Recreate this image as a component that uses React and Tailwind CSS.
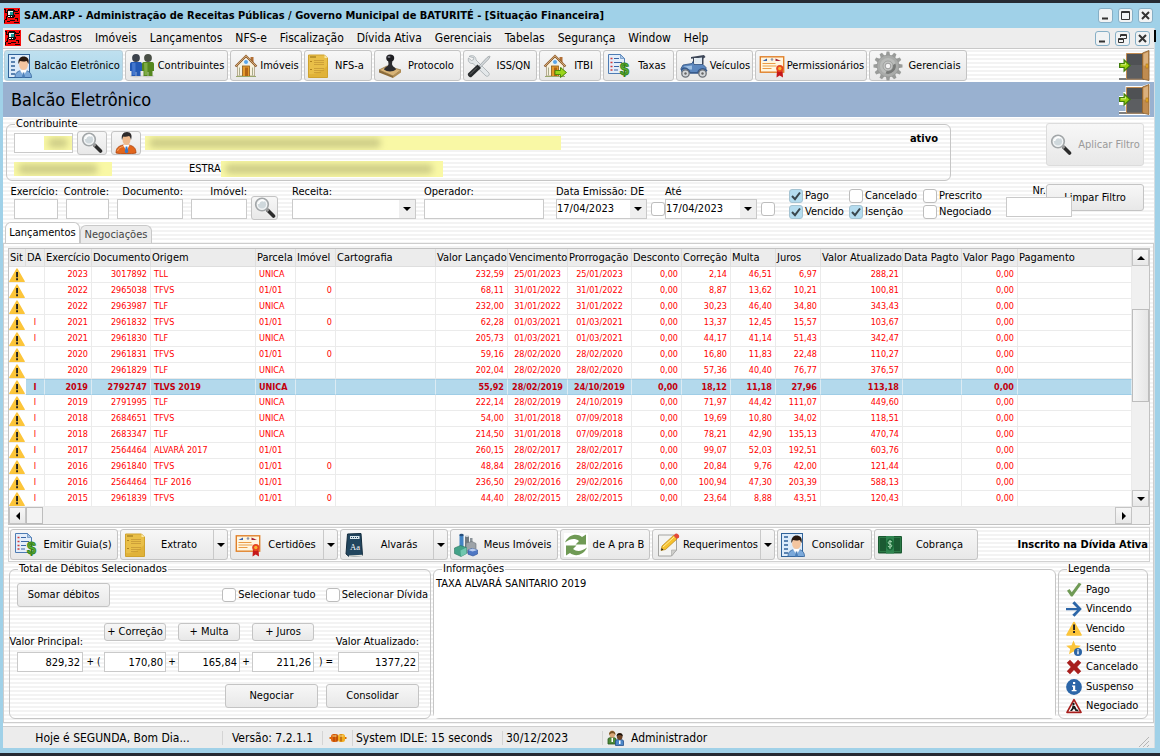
import React from "react";

/* ---------- icons ---------- */

function AppIcon() {
  return (
    <svg viewBox="0 0 16 16" className="size-4 shrink-0" shapeRendering="crispEdges" aria-hidden="true">
      <rect width="16" height="16" fill="#f80c0c" />
      <path
        d="M0 1h2v1H0zM1 2h1v3H1zM2 4h2v1H2zM3 2h1v2H3zM4 1h6v1H4zM10 2h1v2h-1zM11 3h3v1h-3zM14 1h1v2h-1zM11 5h4v1h-4zM10 7h1v2h-1zM4 9h6v1H4zM3 5h1v4H3zM2 8h1v3H2zM1 11h2v1H1zM0 12h1v3H0zM3 13h3v1H3zM6 12h5v1H6zM11 10h3v1h-3zM13 11h1v2h-1zM10 14h5v1h-5z"
        fill="#180404"
      />
      <rect x="4" y="2" width="6" height="7" fill="#181818" />
      <rect x="4" y="3" width="5" height="4" fill="#eef6f6" />
      <rect x="6" y="4" width="3" height="3" fill="#149a9a" />
      <path d="M4 8h2v1H4zM7 8h1v1H7z" fill="#fff" />
    </svg>
  );
}

function BookPerson() {
  return (
    <svg viewBox="0 0 24 24" className="size-6 shrink-0" aria-hidden="true">
      <rect x="0.5" y="0.5" width="21" height="23" fill="#dcebfa" stroke="#2f6299" />
      <path d="M3 4h4M3 8h4M3 12h4M3 16h4M3 20h4" stroke="#2f6299" strokeWidth="1.500" />
      <path d="M7 23.500c0-5 3-6.500 7.500-7.500h2c4 1 7 2.500 7 7.500z" fill="#7ba9da" stroke="#32639a" strokeWidth=".8" />
      <path d="M12 16l3.500 6 3.500-6-3.500-1z" fill="#fff" />
      <path d="M14.800 18.500h1.500l.7 5h-3z" fill="#4b7fb8" />
      <ellipse cx="15.500" cy="10.500" rx="4.400" ry="5.500" fill="#f3c5a0" />
      <path d="M10.500 10c-.8-5 2-7.500 5-7.500 3.500 0 6.200 2 5 7.500-1-1-1-2.500-2-3-2.500.8-5 .5-6.500 0-.7.8-.7 2-1.500 3z" fill="#27180f" />
    </svg>
  );
}

function TwoPeople() {
  return (
    <svg viewBox="0 0 26 24" className="h-6 w-6.5 shrink-0" aria-hidden="true">
      <ellipse cx="7" cy="22" rx="6" ry="1.500" fill="#cfcfcf" />
      <ellipse cx="19" cy="22" rx="6" ry="1.500" fill="#cfcfcf" />
      <circle cx="7" cy="4" r="3.900" fill="#3d434c" />
      <path d="M1 10c0-1.500 1-2 2.500-2h7c1.500 0 2.500.5 2.500 2v7h-1.500v5H7.300v-4h-.6v4H2.500v-5H1z" fill="#2359b5" />
      <path d="M3 9h3.500v12H3.500z" fill="#5c8ee0" opacity=".6" />
      <circle cx="19" cy="4" r="3.900" fill="#4a5046" />
      <path d="M13 10c0-1.500 1-2 2.500-2h7c1.500 0 2.500.5 2.500 2v7h-1.500v5h-4.200v-4h-.6v4h-4.200v-5H13z" fill="#55871f" />
      <path d="M15 9h3.500v12h-3z" fill="#97c35d" opacity=".6" />
    </svg>
  );
}

function House({ arrow = false }) {
  return (
    <svg viewBox="0 0 24 24" className="size-6 shrink-0" aria-hidden="true">
      <path d="M16.500 3h3v6h-3z" fill="#b26f35" />
      <path d="M3.500 11L12 3l8.500 8v11h-17z" fill="#f7f1dd" stroke="#a79a7c" strokeWidth=".8" />
      <path d="M1.500 12.500L12 2l10.500 10.500" fill="none" stroke="#8d5a2d" strokeWidth="2.200" />
      <path d="M2 12L12 1.800 22 12" fill="none" stroke="#e9c48b" strokeWidth=".8" />
      <circle cx="12" cy="8" r="2.500" fill="#5aa6e8" stroke="#fff" strokeWidth=".8" />
      <rect x="8.500" y="12" width="7" height="10.500" fill="#e49a2c" stroke="#8b5a1c" strokeWidth=".8" />
      <rect x="11" y="13.500" width="3" height="9" fill="#b26414" />
      <path d="M5.500 13.500v8M18.500 13.500v8" stroke="#a8ab8c" />
      <path d="M2 22.500h20" stroke="#9aa86d" />
      {arrow && <path d="M12 16.500h5.500V13.500l6 5-6 5v-3H12z" fill="#9ad51b" stroke="#4b8a09" strokeWidth="1" />}
    </svg>
  );
}

function YellowDoc() {
  return (
    <svg viewBox="0 0 20 24" className="h-6 w-5 shrink-0" aria-hidden="true">
      <path d="M.5 1h16l3 3v19.500H.5z" fill="#e9bf48" stroke="#cfa22e" />
      <path d="M16.500 1l3 3h-3z" fill="#fae9a8" />
      <path d="M2 3h6" stroke="#8e6c14" />
      <path d="M6 6.500h10M6 8.500h10M6 10.500h10M6 14.500h10M6 16.500h10M6 18.500h7" stroke="#cda039" />
      <path d="M2 7.500h2M2 15.500h2" stroke="#b0821e" />
      <path d="M1 20c6 1 13-3 18-8v11H1z" fill="#d39f24" opacity=".4" />
    </svg>
  );
}

function Stamp() {
  return (
    <svg viewBox="0 0 24 24" className="size-6 shrink-0" aria-hidden="true">
      <path d="M1 16l8-4 14 4-8 6z" fill="#d9b477" stroke="#8a6a35" strokeWidth=".7" />
      <path d="M1 16v2.500l14 5.500v-2z" fill="#8b6b39" />
      <path d="M15 22v2l8-5.500V16z" fill="#b08b50" />
      <path d="M6 15.500c1-3 4-2.500 4.500-5.500L10 6h4.500L14 10c.5 3 3.500 3 4 5.500-3 2.500-9 2.500-12 0z" fill="#2b2b2f" />
      <ellipse cx="12.200" cy="4" rx="4" ry="3.600" fill="#1e1e22" />
      <ellipse cx="11" cy="3" rx="1.500" ry="1" fill="#7c7c86" />
    </svg>
  );
}

function Tools() {
  return (
    <svg viewBox="0 0 24 24" className="size-6 shrink-0" aria-hidden="true">
      <path d="M2 2.500C5 .5 9 2 9 6l13 13c1 2-1 4-3 3L6 9.500C2.500 10 .5 7 1.500 4l3 2.500 2-.8.4-2z" fill="#e3e7e9" stroke="#a3abaf" strokeWidth=".8" />
      <path d="M12 12L20 3.500l2.500-1.500.5.800-1.500 2.400-8 8z" fill="#d4d9dc" stroke="#8f9598" strokeWidth=".7" />
      <path d="M10.500 10.500l3.500 3.500-9.500 9c-1.500 1-4.500-1.500-3.500-3.500z" fill="#26292b" />
      <path d="M10 13.500l-7 7" stroke="#777" strokeWidth=".8" />
    </svg>
  );
}

function DocDollar() {
  return (
    <svg viewBox="0 0 24 24" className="size-6 shrink-0 overflow-visible" aria-hidden="true">
      <path d="M1.500.5h12l4 4v15h-16z" fill="#e4eefa" stroke="#4e7cb4" />
      <path d="M13.500.5v4h4z" fill="#a9c5e6" stroke="#4e7cb4" strokeWidth=".6" />
      <path d="M3.500 4.500h2M3.500 8.500h2M3.500 12.500h2M3.500 16h2" stroke="#d03b3b" strokeWidth="1.600" />
      <path d="M7 4.500h5M7 8.500h8M7 12.500h5M7 16h4" stroke="#3a67a5" strokeWidth="1.200" />
      <text x="17.500" y="20.500" textAnchor="middle" fontFamily="Liberation Sans, sans-serif" fontWeight="700" fontSize="16" fill="#5cb531" stroke="#35801a" strokeWidth=".9">$</text>
    </svg>
  );
}

function Car() {
  return (
    <svg viewBox="0 0 28 24" className="h-6 w-7 shrink-0" aria-hidden="true">
      <path d="M11 3l13-2 1.500 2-2 1.500v6H22V4H14v5h-1V4.500l-2 .3z" fill="#3e4758" />
      <path d="M14.500 4.500l7.500-1v6h-7.500z" fill="#dfe9f2" />
      <path d="M3 11l9-1.500 1-2 1 3h9l3 3v5H2l-1-4z" fill="#5b87bf" stroke="#2c4e7d" strokeWidth=".8" />
      <path d="M4 12.500l8-1v4H5z" fill="#9dbfe3" />
      <path d="M1 16c4-4 8-1 9 3h8c0-4 6-6 9-2" fill="none" stroke="#35588a" strokeWidth="1.500" />
      <circle cx="5.500" cy="19.500" r="3.700" fill="#d5d8db" stroke="#6c7178" strokeWidth="1.300" />
      <circle cx="22.500" cy="19.500" r="3.700" fill="#d5d8db" stroke="#6c7178" strokeWidth="1.300" />
      <circle cx="5.500" cy="19.500" r="1.200" fill="#666" />
      <circle cx="22.500" cy="19.500" r="1.200" fill="#666" />
    </svg>
  );
}

function Certificate() {
  return (
    <svg viewBox="0 0 25 24" className="h-6 w-6.5 shrink-0" aria-hidden="true">
      <rect x=".8" y="2.800" width="23.400" height="15.400" fill="#fff6e0" stroke="#e0812a" strokeWidth="1.400" />
      <path d="M3 7l4.500-2.500V7z" fill="#3b62ad" />
      <circle cx="12.500" cy="5.500" r="1.300" fill="#8c97ad" />
      <path d="M16 7V4.500L21.500 7z" fill="#a3243b" />
      <path d="M3 9.500h13M3 12h14M3 14.500h9" stroke="#eb9b45" strokeWidth="1.200" />
      <path d="M17.500 16l-.5 7.500 3.200-2 3.300 2L23 16z" fill="#c6181a" />
      <circle cx="20.300" cy="14.500" r="3.600" fill="#e6451f" />
      <circle cx="20.300" cy="14.500" r="1.700" fill="#f7b431" />
    </svg>
  );
}

function Gear() {
  return (
    <svg viewBox="0 0 30 30" className="size-7.5 shrink-0" aria-hidden="true">
      <g fill="#999b99">
        {[0, 30, 60, 90, 120, 150, 180, 210, 240, 270, 300, 330].map((a) => (
          <path key={a} d="M12.800 5l.8-4.500h2.800l.8 4.500z" transform={`rotate(${a} 15 15)`} />
        ))}
      </g>
      <circle cx="15" cy="15" r="11" fill="#a9aba9" stroke="#8f918f" strokeWidth=".6" />
      <circle cx="15" cy="15" r="8" fill="#b9bbb9" />
      <path d="M22.500 12.500a8 8 0 01-10 10L15 17z" fill="#777977" />
      <circle cx="15" cy="15" r="5" fill="#c4c6c4" stroke="#8a8c8a" strokeWidth=".6" />
      <circle cx="15" cy="15" r="2.800" fill="#f5f5f5" stroke="#888" strokeWidth=".8" />
    </svg>
  );
}

function Door({ outlined }) {
  return (
    <svg viewBox="0 0 31 31" className="size-[31px] shrink-0" aria-hidden="true">
      {outlined && <path d="M0 31V27h6.500v-4.500L4 21H0v-9h4V8h2.500V2H23l6-2h2v31z" fill="#fff" />}
      <path d="M0 29h25" stroke="#555" strokeWidth="1.500" />
      <path d="M7.500 3.500h16V29h-16z" fill="#4f5154" stroke="#c08a50" strokeWidth="1" />
      <path d="M8 15h15v14H8z" fill="#66686b" opacity=".6" />
      <path d="M23.500 3L30 .5v30L23.500 29z" fill="#c08c50" stroke="#8b5f2c" strokeWidth=".8" />
      <path d="M24.500 4L29 2v14l-4.500-.5z" fill="#dbb07c" />
      <rect x="27" y="14" width="2" height="4" fill="#f4b52c" stroke="#a36d12" strokeWidth=".6" />
      <path d="M.6 13.500h4.500v-3.700l6 5.700-6 5.700v-3.700H.6z" fill="#99cf0e" stroke="#3f7d0a" strokeWidth="1.200" />
      <path d="M2 14.800h4.500v-2" fill="none" stroke="#d9f58c" strokeWidth=".9" />
    </svg>
  );
}

function Magnifier() {
  return (
    <svg viewBox="0 0 22 22" className="size-5.5 shrink-0" aria-hidden="true">
      <path d="M14 13.500l5.500 5.500" stroke="#2c2c2c" strokeWidth="3.600" strokeLinecap="round" />
      <path d="M12 11.500l2.500 2.500" stroke="#9a9a9a" strokeWidth="2.500" />
      <circle cx="8" cy="7.500" r="6.300" fill="#e4e8ea" stroke="#a2a6a8" strokeWidth="1.600" />
      <circle cx="8" cy="7.500" r="4.600" fill="#cfd8dc" stroke="#fff" strokeWidth=".8" />
      <path d="M4.500 7a4 4 0 016-3" fill="none" stroke="#fff" strokeWidth="1.600" />
    </svg>
  );
}

function Person() {
  return (
    <svg viewBox="0 0 22 22" className="size-5.5 shrink-0" aria-hidden="true">
      <path d="M1 21c0-5 2.500-7 7-8h6c4.500 1 7 3 7 8-5 1.300-15 1.300-20 0z" fill="#e2661c" stroke="#a53d08" strokeWidth=".7" />
      <path d="M2.500 19c1-3 3-4 6-4.500" stroke="#f7a562" fill="none" />
      <path d="M8 13l3.500 6 3-6-3-1z" fill="#fff" />
      <path d="M10.700 14.500h1.600l1 5.500-1.800 1.500-1.800-1.500z" fill="#3979c8" />
      <ellipse cx="11.500" cy="7.500" rx="4" ry="5.500" fill="#efb98c" />
      <path d="M7 8c-1-5 1-8 5-8s5.500 3 4 8c-.5-2-1-3.500-2-4-2 .8-4 .8-5.500.5C7.500 5.500 7.500 7 7 8z" fill="#2d2a2b" />
    </svg>
  );
}

function DictBook() {
  return (
    <svg viewBox="0 0 20 24" className="h-6 w-5 shrink-0" aria-hidden="true">
      <path d="M2.500 1L16 .5l1.500 22L4 23.500 1 21z" fill="#21455e" stroke="#142c3e" />
      <path d="M4 22.500l13.500-.8v1.300L4 24z" fill="#e5e5dd" />
      <rect x="5" y="3" width="9.500" height="3" fill="#d9e6ec" />
      <path d="M6 4.500h7.500" stroke="#21455e" strokeDasharray="1 1" />
      <text x="5" y="16.500" fontFamily="Liberation Serif, serif" fontSize="8.500" fill="#fff">Aa</text>
    </svg>
  );
}

function Towers() {
  return (
    <svg viewBox="0 0 24 24" className="size-6 shrink-0" aria-hidden="true">
      <path d="M5.500 2h4v17h-4z" fill="#4384c4" /><ellipse cx="7.500" cy="2" rx="2.200" ry="1.200" fill="#274f7c" />
      <path d="M11 3h4v14h-4z" fill="#727a80" /><ellipse cx="13" cy="3" rx="2" ry="1.100" fill="#d5dade" />
      <path d="M16 5h2.500v9H16z" fill="#8b9399" />
      <path d="M12 10l6-1.500 4 2v9l-6 1.500-4-2z" fill="#9da3a8" stroke="#6a7075" strokeWidth=".6" />
      <path d="M.5 15l6-2.500 6 2v6L7 23.500l-6.500-3z" fill="#44a389" stroke="#2a7560" strokeWidth=".6" />
      <path d="M.5 15l6 2.500 6-3v6L7 23.500l-.5-6z" fill="#71c7ae" />
      <path d="M14 17l4-1.500 5.500 1.500v4L19 23l-5-1.800z" fill="#4f78c4" stroke="#2c4f95" strokeWidth=".6" />
      <path d="M14 17l4.500 1.500 5-1.500-5-1.500z" fill="#b9ccee" />
    </svg>
  );
}

function Refresh() {
  return (
    <svg viewBox="0 0 24 24" className="size-6 shrink-0" aria-hidden="true">
      <rect width="24" height="24" fill="#fff" />
      <path d="M1 9.500C4.500 1.500 13 0 18 4l4-2.500v10H11.500L15 8C11 5 6.500 5.500 1 9.500z" fill="#6f9a55" />
      <path d="M23 14.500C19.500 22.500 11 24 6 20l-4 2.500v-10h10.500L9 16c4 3 8.500 2.500 14-1.500z" fill="#6f9a55" />
    </svg>
  );
}

function NotePencil() {
  return (
    <svg viewBox="0 0 24 24" className="size-6 shrink-0" aria-hidden="true">
      <path d="M1.500 2h18v15l-5 6h-13z" fill="#f4f4f2" stroke="#a4a4a2" />
      <path d="M19.500 17h-5v6z" fill="#cfcfcc" stroke="#a4a4a2" strokeWidth=".6" />
      <path d="M4 17.500L5 13 16.500 2.500l3.500 3.500L8.500 16.500z" fill="#f6c12d" stroke="#b88415" strokeWidth=".7" />
      <path d="M6 14L17.500 3.700" stroke="#fdeb9b" />
      <path d="M16.500 2.500L18.500.7c1.500-1 4.500 1.500 3.500 3.500l-2 1.800z" fill="#e3493a" />
      <path d="M4 17.500l.7-2.500 1.700 1.800z" fill="#222" />
    </svg>
  );
}

function Cash() {
  return (
    <svg viewBox="0 0 24 18" className="h-[18px] w-6 shrink-0" aria-hidden="true">
      <rect width="24" height="17.500" rx="1" fill="#1b5a32" />
      <rect x="1.500" y="1.500" width="21" height="14" fill="none" stroke="#2c7a47" />
      <rect x="8" width="8" height="17.500" fill="#2f8550" />
      <ellipse cx="12" cy="8.500" rx="4" ry="6" fill="#1b6a38" />
      <path d="M14 6c-1-1.200-3.800-1-3.800.8 0 1.800 3.600 1 3.600 3 0 1.600-2.800 1.700-3.900.4M12 4v9" fill="none" stroke="#a9d9b5" strokeWidth="1" />
    </svg>
  );
}

function Warning() {
  return (
    <svg viewBox="0 0 16 15" className="block h-[15px] w-4 shrink-0" aria-hidden="true">
      <path d="M8 2.200L15 14.500H1z" fill="#fcc53a" stroke="#fcc53a" strokeWidth="1.600" strokeLinejoin="round" />
      <path d="M7.100 5h1.900v5.200H7.100zM7.100 11.300h1.900v2H7.100z" fill="#222" />
    </svg>
  );
}

function LegendIcon({ kind }) {
  return (
    <svg viewBox="0 0 16 16" className="size-4 shrink-0" aria-hidden="true">
      {kind === "check" && <path d="M1 8.800L3.500 7l2.300 3.200L12.800.8 15.500 2 6.500 14.500 5 14.500z" fill="#6f9a55" />}
      {kind === "arrow" && <path d="M0 7h11L6.300 2.200 8.500.3 15.800 8l-7.300 7.700-2.200-2L11 9.200H0z" fill="#2c66a8" />}
      {kind === "warn" && (
        <>
          <path d="M8 1.500L15 14H1z" fill="#fcc53a" stroke="#fcc53a" strokeWidth="1.600" strokeLinejoin="round" />
          <path d="M7.100 3.500h1.900v5.500H7.100zM7.100 10h1.900v2H7.100z" fill="#222" />
        </>
      )}
      {kind === "star" && (
        <>
          <path d="M7.500.5l2 4.800 5.300.4-4 3.400 1.200 5.200-4.500-2.800-4.500 2.800 1.200-5.200-4-3.400 5.300-.4z" fill="#fcc53a" />
          <circle cx="12" cy="12" r="4" fill="#2b64a5" />
          <path d="M11.300 9.300h1.400v1.200h-1.400zM11.300 11.200h1.400v3h-1.400z" fill="#fff" />
        </>
      )}
      {kind === "cross" && (
        <path d="M4 .8L8 4.900l4-4.100 3.200 3L11.200 8l4 4.200-3.200 3-4-4.100-4 4.100-3.200-3L4.800 8l-4-4.200z" fill="#a81f1d" />
      )}
      {kind === "info" && (
        <>
          <circle cx="8" cy="8" r="7.900" fill="#2c66a8" />
          <path d="M7 3h2.200v2H7zM6 6.500h3.200V11H10.500v1.300H5.700V11H7V7.800H6z" fill="#fff" />
        </>
      )}
      {kind === "works" && (
        <>
          <path d="M8 1.700L15 14.300H1z" fill="#fff" stroke="#a81f1d" strokeWidth="1.700" strokeLinejoin="round" />
          <circle cx="7.500" cy="6" r="1.200" fill="#1b1b1b" />
          <path d="M6.500 7.200l2.500.8 2.500 5h-2L8 10.500 6 13H4l2-3zM11 11l2 2.300h-2.500z" fill="#1b1b1b" />
        </>
      )}
    </svg>
  );
}

function Connector() {
  return (
    <svg viewBox="0 0 17 10" className="h-2.5 w-4.5 shrink-0" aria-hidden="true">
      <path d="M0 5h3M14 5h3" stroke="#d96d00" strokeWidth="2" />
      <rect x="1.500" y="1" width="7" height="8" rx="2.500" fill="#e0620d" />
      <rect x="8.500" y="1" width="7" height="8" rx="2.500" fill="#f2ac1e" />
      <path d="M4.500 1.500v7M7.500 1.500v7M11.500 1.500v7" stroke="#9c4107" />
      <path d="M3 3h4M10 3h4" stroke="#ffe08a" />
    </svg>
  );
}

function UsersMini() {
  return (
    <svg viewBox="0 0 18 16" className="h-4 w-4.5 shrink-0" aria-hidden="true">
      <path d="M1 14V9c0-2 8-2 8 0v5z" fill="#4c8a3a" stroke="#27561a" strokeWidth=".8" />
      <path d="M4.500 8v4h1.500V8z" fill="#fff" />
      <ellipse cx="5.200" cy="4.200" rx="2.800" ry="3.600" fill="#d9a878" />
      <path d="M2 5C1.500-.5 9-.5 8.500 5 7 2.500 4 2.500 2 5z" fill="#775224" />
      <path d="M8.500 15.500V11c0-2 8-2 8 0v4.500z" fill="#4b86c8" stroke="#23508a" strokeWidth=".8" />
      <path d="M12 10.500V14h1.500v-3.500z" fill="#fff" />
      <ellipse cx="12.700" cy="6.500" rx="2.800" ry="3.400" fill="#6b4226" />
      <path d="M9.500 6.500c-.5-4.500 7-4.500 6.300 0-1.500-2-5-2-6.300 0z" fill="#17100b" />
    </svg>
  );
}

function ArrowGlyph({ dir = "down" }) {
  const d = {
    down: "M0 2h8L4 6z",
    up: "M0 6h8L4 2z",
    left: "M6 0v8L2 4z",
    right: "M2 0v8l4-4z",
  }[dir];
  return (
    <svg viewBox="0 0 8 8" className="size-2 shrink-0" aria-hidden="true">
      <path d={d} fill="#000" />
    </svg>
  );
}

/* ---------- shared controls ---------- */

const STRIPES =
  "bg-[repeating-linear-gradient(180deg,#ffffff_0px,#ffffff_2px,#f3f3f3_2px,#f3f3f3_4px)]";
const BTN =
  "flex items-center rounded-[3px] border border-[#c4c4c4] bg-linear-to-b from-[#f7f7f7] to-[#e8e8e8] whitespace-nowrap";
const FIELD = "border border-[#cacaca] bg-white outline-none";

function PushButton({ className, children, ...rest }) {
  return (
    <button type="button" className={`${BTN} justify-center ${className}`} {...rest}>
      {children}
    </button>
  );
}

function ToolButton({ icon, label, className, active }) {
  return (
    <button
      type="button"
      className={`flex h-[31px] shrink-0 items-center rounded-[3px] border pl-[3px] whitespace-nowrap ${
        active
          ? "border-[#b9cfda] bg-linear-to-b from-[#bfe0ef] to-[#a9d5ea]"
          : "border-[#c4c4c4] bg-linear-to-b from-[#f7f7f7] to-[#e8e8e8]"
      } ${className}`}
    >
      {icon}
      <span className="flex-1 text-center">{label}</span>
    </button>
  );
}

function SplitButton({ icon, label, className }) {
  return (
    <div className={`${BTN} h-[31px] shrink-0 ${className}`}>
      <button type="button" className="flex h-full flex-1 items-center pl-1">
        {icon}
        <span className="flex-1 text-center">{label}</span>
      </button>
      <button type="button" aria-label={`Opções de ${label}`} className="flex h-full w-3.5 items-center justify-center border-l border-[#c9c9c9]">
        <ArrowGlyph />
      </button>
    </div>
  );
}

function TextField({ label, className, labelClass = "text-right" }) {
  return (
    <label className={`flex flex-col ${className}`}>
      <span className={`h-[15px] whitespace-nowrap leading-[15px] ${labelClass}`}>{label}</span>
      <input type="text" className={`h-5 w-full ${FIELD}`} />
    </label>
  );
}

function SelectField({ label, value, className }) {
  return (
    <label className={`flex flex-col ${className}`}>
      <span className="h-[15px] whitespace-nowrap leading-[15px]">{label}</span>
      <span className="grid">
        <select className={`col-start-1 row-start-1 h-5 w-full appearance-none ${FIELD}`} defaultValue={value}>
          <option>{value}</option>
        </select>
        <span className="pointer-events-none col-start-1 row-start-1 m-px flex w-4 items-center justify-center justify-self-end bg-[#efefef]">
          <ArrowGlyph />
        </span>
      </span>
    </label>
  );
}

function Check({ label, checked, hidden, className = "gap-0.5" }) {
  return (
    <label className={`flex items-center whitespace-nowrap ${className}`}>
      <span className="grid size-3.5 place-items-center">
        <input
          type="checkbox"
          defaultChecked={checked}
          aria-label={hidden ? label : undefined}
          className="peer col-start-1 row-start-1 size-3.5 appearance-none rounded-[3px] border border-[#bdbdbd] bg-white checked:border-[#a5c3d2] checked:bg-[#b5dcef]"
        />
        <svg viewBox="0 0 12 12" className="pointer-events-none invisible col-start-1 row-start-1 size-3 peer-checked:visible" aria-hidden="true">
          <path d="M2 6l3 3.200L10 2.500" fill="none" stroke="#3a464d" strokeWidth="2" />
        </svg>
      </span>
      {!hidden && <span>{label}</span>}
    </label>
  );
}

function Group({ title, className, children }) {
  return (
    <fieldset className={`flex min-w-0 flex-col rounded-md border border-[#c6c6c6] ${className}`}>
      <legend className="ml-2 h-3.5 px-px leading-3.5">{title}</legend>
      {children}
    </fieldset>
  );
}

function WinButtons({ restore }) {
  const cls =
    "flex size-[15px] items-center justify-center rounded-[3px] border border-[#86afc6] bg-[#f1f3f4] text-[#333]";
  return (
    <div className="flex gap-[5px]">
      <button type="button" aria-label="Minimizar" className={cls}>
        <svg viewBox="0 0 11 11" className="size-[11px]"><path d="M2 8.500h6" stroke="currentColor" strokeWidth="2" /></svg>
      </button>
      <button type="button" aria-label={restore ? "Restaurar" : "Maximizar"} className={cls}>
        <svg viewBox="0 0 11 11" className="size-[11px]" fill="none" stroke="currentColor">
          {restore ? (
            <path d="M3.500 4V1.500h6v4H7M3.500 2.500h6M1.500 5.500h5v4h-5zM1.500 6.500h5" />
          ) : (
            <path d="M1.500 1.500h8v8h-8zM1.500 2.500h8" />
          )}
        </svg>
      </button>
      <button type="button" aria-label="Fechar" className={cls}>
        <svg viewBox="0 0 11 11" className="size-[11px]"><path d="M2 2l7 7M9 2l-7 7" stroke="currentColor" strokeWidth="2" /></svg>
      </button>
    </div>
  );
}

/* ---------- data ---------- */

const MENUS = ["Cadastros", "Imóveis", "Lançamentos", "NFS-e", "Fiscalização", "Dívida Ativa", "Gerenciais", "Tabelas", "Segurança", "Window", "Help"];

const COLUMNS = [
  ["Sit", "w-[17px]", "text-left"],
  ["DA", "w-[19px]", "text-center"],
  ["Exercício", "w-[47px]", "text-right"],
  ["Documento", "w-[59px]", "text-right"],
  ["Origem", "w-[105px]", "text-left"],
  ["Parcela", "w-[40px]", "text-left"],
  ["Imóvel", "w-[40px]", "text-right"],
  ["Cartografia", "w-[100px]", "text-left"],
  ["Valor Lançado", "w-[72px]", "text-right"],
  ["Vencimento", "w-[60px]", "text-center"],
  ["Prorrogação", "w-[64px]", "text-center"],
  ["Desconto", "w-[50px]", "text-right"],
  ["Correção", "w-[49px]", "text-right"],
  ["Multa", "w-[45px]", "text-right"],
  ["Juros", "w-[45px]", "text-right"],
  ["Valor Atualizado", "w-[82px]", "text-right"],
  ["Data Pagto", "w-[59px]", "text-left"],
  ["Valor Pago", "w-[56px]", "text-right"],
  ["Pagamento", "", "text-left"],
];

const ROWS = [
  "|2023|3017892|TLL|UNICA|||232,59|25/01/2023|25/01/2023|0,00|2,14|46,51|6,97|288,21||0,00|",
  "|2022|2965038|TFVS|01/01|0||68,11|31/01/2022|31/01/2022|0,00|8,87|13,62|10,21|100,81||0,00|",
  "|2022|2963987|TLF|UNICA|||232,00|31/01/2022|31/01/2022|0,00|30,23|46,40|34,80|343,43||0,00|",
  "I|2021|2961832|TFVS|01/01|0||62,28|01/03/2021|01/03/2021|0,00|13,37|12,45|15,57|103,67||0,00|",
  "I|2021|2961830|TLF|UNICA|||205,73|01/03/2021|01/03/2021|0,00|44,17|41,14|51,43|342,47||0,00|",
  "|2020|2961831|TFVS|01/01|0||59,16|28/02/2020|28/02/2020|0,00|16,80|11,83|22,48|110,27||0,00|",
  "|2020|2961829|TLF|UNICA|||202,04|28/02/2020|28/02/2020|0,00|57,36|40,40|76,77|376,57||0,00|",
  "I|2019|2792747|TLVS 2019|UNICA|||55,92|28/02/2019|24/10/2019|0,00|18,12|11,18|27,96|113,18||0,00|",
  "I|2019|2791995|TLF|UNICA|||222,14|28/02/2019|24/10/2019|0,00|71,97|44,42|111,07|449,60||0,00|",
  "I|2018|2684651|TFVS|UNICA|||54,00|31/01/2018|07/09/2018|0,00|19,69|10,80|34,02|118,51||0,00|",
  "I|2018|2683347|TLF|UNICA|||214,50|31/01/2018|07/09/2018|0,00|78,21|42,90|135,13|470,74||0,00|",
  "I|2017|2564464|ALVARÁ 2017|01/01|||260,15|28/02/2017|28/02/2017|0,00|99,07|52,03|192,51|603,76||0,00|",
  "I|2016|2961840|TFVS|01/01|0||48,84|28/02/2016|28/02/2016|0,00|20,84|9,76|42,00|121,44||0,00|",
  "I|2016|2564464|TLF 2016|01/01|||236,50|29/02/2016|29/02/2016|0,00|100,94|47,30|203,39|588,13||0,00|",
  "I|2015|2961839|TFVS|01/01|0||44,40|28/02/2015|28/02/2015|0,00|23,64|8,88|43,51|120,43||0,00|",
].map((r) => r.split("|"));

const SELECTED = 7;

const LEGEND = [
  ["check", "Pago"],
  ["arrow", "Vincendo"],
  ["warn", "Vencido"],
  ["star", "Isento"],
  ["cross", "Cancelado"],
  ["info", "Suspenso"],
  ["works", "Negociado"],
];

/* ---------- sections ---------- */

function Redacted({ className, inner }) {
  return (
    <span className={`flex items-center overflow-hidden bg-[#f9f8a5] ${className}`}>
      <span className={`block rounded-full bg-[#cfce88] blur-[3px] ${inner}`} />
    </span>
  );
}

function Taxpayer() {
  return (
    <div className="flex items-start justify-between pr-2.5 pl-[3px]">
      <Group title="Contribuinte" className="h-16 w-[945px]">
        <div className="flex flex-col pr-3 pl-[7px]">
          <div className="flex h-6 items-center gap-1">
            <span className={`flex h-5 w-[59px] items-center justify-end ${FIELD}`}>
              <Redacted className="h-3.5 w-7" inner="ml-1 h-2.5 w-5" />
            </span>
            <PushButton className="h-6 w-[30px]" aria-label="Pesquisar contribuinte"><Magnifier /></PushButton>
            <PushButton className="h-6 w-[30px]" aria-label="Abrir cadastro"><Person /></PushButton>
            <Redacted className="h-3.5 w-[416px]" inner="ml-1 h-2.5 w-[232px]" />
            <span className="ml-auto self-start pt-px font-bold">ativo</span>
          </div>
          <div className="flex h-6 items-center pt-1">
            <Redacted className="h-3.5 w-[98px]" inner="ml-1 h-2.5 w-20" />
            <span className="ml-[77px]">ESTRA</span>
            <Redacted className="h-4 w-[222px]" inner="ml-1 h-2.5 w-[208px]" />
          </div>
        </div>
      </Group>
      <PushButton disabled className="mt-1.5 h-[43px] w-[98px] gap-1.5 border-[#dcdcdc] text-[#9a9a9a]">
        <Magnifier />
        Aplicar Filtro
      </PushButton>
    </div>
  );
}

function Filters() {
  return (
    <div className="flex items-start pt-[3px] pr-2.5 pl-[11px]">
      <TextField label="Exercício:" className="w-[44px] items-end" />
      <TextField label="Controle:" className="ml-2 w-[43px] items-end" />
      <TextField label="Documento:" className="ml-2 w-[66px]" />
      <TextField label="Imóvel:" className="ml-2 w-[56px]" />
      <PushButton className="mt-3 ml-1 h-6 w-[27px]" aria-label="Pesquisar imóvel"><Magnifier /></PushButton>
      <SelectField label="Receita:" value="" className="ml-3.5 w-[124px]" />
      <TextField label="Operador:" labelClass="text-left" className="ml-2 w-[120px]" />
      <SelectField label="Data Emissão: DE" value="17/04/2023" className="ml-3 w-[91px]" />
      <Check label="Ativar data inicial" hidden className="mt-4.5 ml-1" />
      <SelectField label="Até" value="17/04/2023" className="w-[92px]" />
      <Check label="Ativar data final" hidden className="mt-4.5 ml-1" />
      <div className="mt-[5px] ml-3.5 grid grid-cols-[60px_74px_80px] gap-y-0.5">
        <Check label="Pago" checked />
        <Check label="Cancelado" />
        <Check label="Prescrito" />
        <Check label="Vencido" checked />
        <Check label="Isenção" checked />
        <Check label="Negociado" />
      </div>
      <div className="ml-auto flex items-start">
        <label className="z-10 -mr-6.5 flex w-[66px] flex-col">
          <span className="pt-px pr-6.5 text-right leading-3">Nr.</span>
          <input type="text" className={`h-5 w-full ${FIELD}`} />
        </label>
        <PushButton className="h-[27px] w-[98px]">Limpar Filtro</PushButton>
      </div>
    </div>
  );
}

function DataGrid() {
  return (
    <div className="flex border border-[#c2c2c2] bg-[#f0f0f0]">
      <div className="min-w-0 flex-1">
        <table className="w-full table-fixed border-separate border-spacing-0 bg-white">
          <colgroup>
            {COLUMNS.map(([name, width]) => (
              <col key={name} className={width} />
            ))}
          </colgroup>
          <thead>
            <tr>
              {COLUMNS.map(([name]) => (
                <th key={name} className="h-[18px] border-r border-b border-[#dedede] bg-[#ececec] p-0 pl-px text-left leading-4 font-normal whitespace-nowrap">
                  {name}
                </th>
              ))}
            </tr>
          </thead>
          <tbody className="text-[9px] leading-[15px] text-[#ff0000]">
            {ROWS.map((row, r) => {
              const sel = r === SELECTED;
              const tone = sel ? "border-t border-t-[#9fcde6] border-r-[#dcebf3] border-b-[#9fcde6] bg-[#b3d9ec] font-bold text-[#c2000c] leading-[14px]" : "border-r-[#ebebeb] border-b-[#ebebeb]";
              return (
                <tr key={row[2] + r}>
                  <td className="border-b border-[#ebebeb] p-0"><Warning /></td>
                  {row.map((cell, c) => (
                    <td key={c} className={`border-r border-b px-[3px] py-0 whitespace-nowrap ${tone} ${COLUMNS[c + 1][2]}`}>
                      {cell}
                    </td>
                  ))}
                </tr>
              );
            })}
          </tbody>
        </table>
        <div className="flex h-[17px]">
          <button type="button" aria-label="Rolar para a esquerda" className={`${BTN} w-[17px] justify-center rounded-none`}><ArrowGlyph dir="left" /></button>
          <span className="w-[17px] border border-[#bdbdbd] bg-[#f3f3f3]" />
          <button type="button" aria-label="Rolar para a direita" className={`${BTN} ml-auto w-[17px] justify-center rounded-none`}><ArrowGlyph dir="right" /></button>
        </div>
      </div>
      <div className="flex w-[17px] flex-col pb-[17px]">
        <button type="button" aria-label="Rolar para cima" className={`${BTN} h-[17px] justify-center rounded-none`}><ArrowGlyph dir="up" /></button>
        <span className="mt-[43px] h-[93px] border border-[#bdbdbd] bg-linear-to-r from-[#f5f5f5] to-[#e6e6e6]" />
        <button type="button" aria-label="Rolar para baixo" className={`${BTN} mt-auto h-[17px] justify-center rounded-none`}><ArrowGlyph dir="down" /></button>
      </div>
    </div>
  );
}

function ActionBar() {
  return (
    <div className="flex items-center gap-0.5 border border-[#d2d2d2] p-px">
      <ToolButton icon={<DocDollar />} label="Emitir Guia(s)" className="w-[108px]" />
      <SplitButton icon={<YellowDoc />} label="Extrato" className="w-[108px]" />
      <SplitButton icon={<Certificate />} label="Certidões" className="w-[108px]" />
      <SplitButton icon={<DictBook />} label="Alvarás" className="w-[108px]" />
      <ToolButton icon={<Towers />} label="Meus Imóveis" className="w-[108px]" />
      <ToolButton icon={<Refresh />} label="de A pra B" className="w-[90px]" />
      <SplitButton icon={<NotePencil />} label="Requerimentos" className="w-[123px]" />
      <ToolButton icon={<BookPerson />} label="Consolidar" className="w-[95px]" />
      <ToolButton icon={<Cash />} label="Cobrança" className="w-[104px]" />
      <span className="ml-auto font-bold whitespace-nowrap">Inscrito na Dívida Ativa</span>
    </div>
  );
}

function Amount({ label, value }) {
  return <input aria-label={label} defaultValue={value} className={`h-5 w-full min-w-0 pr-0.5 text-right ${FIELD}`} />;
}

function Totals() {
  return (
    <Group title="Total de Débitos Selecionados" className="w-[422px] shrink-0">
      <div className="flex flex-1 flex-col pt-[7px] pr-0.5 pl-[7px]">
        <div className="flex items-center">
          <PushButton className="h-6 w-[93px]">Somar débitos</PushButton>
          <div className="ml-auto flex gap-2.5">
            <Check label="Selecionar tudo" />
            <Check label="Selecionar Dívida" />
          </div>
        </div>
        <div className="mt-4 grid grid-cols-[66px_21px_62px_12px_62px_12px_62px_24px_81px] items-center">
          <span className="self-end justify-self-end whitespace-nowrap pb-1 leading-3">Valor Principal:</span>
          <span />
          <PushButton className="mb-[11px] h-[18px]">+ Correção</PushButton>
          <span />
          <PushButton className="mb-[11px] h-[18px]">+ Multa</PushButton>
          <span />
          <PushButton className="mb-[11px] h-[18px]">+ Juros</PushButton>
          <span />
          <span className="self-end justify-self-end whitespace-nowrap pb-1 leading-3">Valor Atualizado:</span>
          <Amount label="Valor Principal" value="829,32" />
          <span className="text-center text-[10px]">+ (</span>
          <Amount label="Correção" value="170,80" />
          <span className="text-center text-[10px]">+</span>
          <Amount label="Multa" value="165,84" />
          <span className="text-center text-[10px]">+</span>
          <Amount label="Juros" value="211,26" />
          <span className="text-center text-[10px]">) =</span>
          <Amount label="Valor Atualizado" value="1377,22" />
        </div>
        <div className="mt-3 flex w-[402px] justify-end gap-2">
          <PushButton className="h-6 w-[93px]">Negociar</PushButton>
          <PushButton className="h-6 w-[93px]">Consolidar</PushButton>
        </div>
      </div>
    </Group>
  );
}

export default function App() {
  return (
    <div className="flex min-h-screen flex-col bg-[#262b33] py-[3px] font-['DejaVu_Sans_Condensed','Noto_Sans',sans-serif] text-[11px] leading-[14px] text-black">
      <div className="flex flex-1 flex-col bg-[#a0d1e8] pr-[5px] pb-[5px] pl-[3px]">
        <header className="flex h-[25px] items-center gap-1 pr-0.5 pl-px">
          <AppIcon />
          <h1 className="font-bold whitespace-nowrap">
            SAM.ARP - Administração de Receitas Públicas / Governo Municipal de BATURITÉ - [Situação Financeira]
          </h1>
          <div className="ml-auto"><WinButtons /></div>
        </header>

        <div className={`flex flex-1 flex-col border-r border-[#d5dde2] ${STRIPES}`}>
          <nav className="relative flex h-[21px] items-center border-b border-[#c9c9c9] bg-[#ededed] pr-1 pl-0.5 text-[12px]">
            <AppIcon />
            <ul className="flex pl-px">
              {MENUS.map((m) => (
                <li key={m} className="pr-[7px] pl-1.5"><a href="#" className="whitespace-nowrap">{m}</a></li>
              ))}
            </ul>
            <div className="ml-auto"><WinButtons restore /></div>
            <span className="absolute top-0.5 -right-0.5 h-3 w-0.5 bg-black" />
          </nav>

          <div className="flex h-[33px] items-center gap-0.5 pr-1 pl-px">
            <ToolButton active icon={<BookPerson />} label="Balcão Eletrônico" className="w-[119px]" />
            <ToolButton icon={<TwoPeople />} label="Contribuintes" className="w-[103px]" />
            <ToolButton icon={<House />} label="Imóveis" className="w-[72px]" />
            <ToolButton icon={<YellowDoc />} label="NFS-a" className="w-[68px]" />
            <ToolButton icon={<Stamp />} label="Protocolo" className="w-[87px]" />
            <ToolButton icon={<Tools />} label="ISS/QN" className="w-[74px]" />
            <ToolButton icon={<House arrow />} label="ITBI" className="w-[62px]" />
            <ToolButton icon={<DocDollar />} label="Taxas" className="w-[71px]" />
            <ToolButton icon={<Car />} label="Veículos" className="w-[77px]" />
            <ToolButton icon={<Certificate />} label="Permissionários" className="w-[112px]" />
            <ToolButton icon={<Gear />} label="Gerenciais" className="w-[98px]" />
            <button type="button" aria-label="Sair" className="ml-auto"><Door /></button>
          </div>

          <div className="flex h-[35px] items-center justify-between bg-[#99b1d0] pr-1 pl-2">
            <h2 className="text-[18px] leading-6">Balcão Eletrônico</h2>
            <button type="button" aria-label="Fechar tela"><Door outlined /></button>
          </div>

          <main className="flex flex-1 flex-col">
            <Taxpayer />
            <Filters />

            <div className="mt-0.5 flex items-end pl-0.5" role="tablist">
              <button type="button" role="tab" aria-selected="true" className="h-[21px] w-[75px] rounded-t-md border border-b-0 border-[#c9c9c9] bg-white whitespace-nowrap">
                Lançamentos
              </button>
              <button type="button" role="tab" aria-selected="false" className="h-[18px] w-[72px] rounded-t-md border border-b-0 border-[#c9c9c9] bg-[#ececec] whitespace-nowrap text-[#444]">
                Negociações
              </button>
            </div>

            <div className="mb-[3px] flex flex-1 flex-col border border-[#cdcdcd] p-[3px] pt-1 pl-1">
              <DataGrid />
              <div className="mt-0.5"><ActionBar /></div>
              <div className="flex flex-1 gap-0.5 pr-0.5 pl-px">
                <Totals />
                <Group title="Informações" className="flex-1 bg-white">
                  <textarea
                    aria-label="Informações"
                    defaultValue="TAXA ALVARÁ SANITARIO 2019"
                    className="min-h-24 flex-1 resize-none bg-white px-0.5 pt-px outline-none"
                  />
                </Group>
                <Group title="Legenda" className="w-[90px] shrink-0">
                  <ul className="flex flex-1 flex-col justify-between pt-1.5 pb-1 pl-[7px]">
                    {LEGEND.map(([kind, name]) => (
                      <li key={name} className="flex items-center gap-1">
                        <LegendIcon kind={kind} />
                        {name}
                      </li>
                    ))}
                  </ul>
                </Group>
              </div>
            </div>
          </main>

          <footer className="flex h-[22px] items-center border-t border-[#cfcfcf] bg-[#ececec] text-[12px] whitespace-nowrap">
            <span className="w-[220px] border-r border-[#d4d4d4] text-center">Hoje é SEGUNDA, Bom Dia...</span>
            <span className="w-[100px] border-r border-[#d4d4d4] text-center">Versão: 7.2.1.1</span>
            <span className="flex h-4 w-[30px] items-center justify-center border-r border-[#d4d4d4]"><Connector /></span>
            <span className="w-[150px] border-r border-[#d4d4d4] pl-[3px]">System IDLE: 15 seconds</span>
            <span className="w-[100px] border-r border-[#d4d4d4] pl-[3px]">30/12/2023</span>
            <span className="flex items-center gap-1.5 pl-1"><UsersMini />Administrador</span>
            <svg viewBox="0 0 12 12" className="mr-1 ml-auto size-3 self-end" aria-hidden="true">
              <path d="M1 11L11 1M5 11l6-6M9 11l2-2" stroke="#b5b5b5" />
            </svg>
          </footer>
        </div>
      </div>
    </div>
  );
}
